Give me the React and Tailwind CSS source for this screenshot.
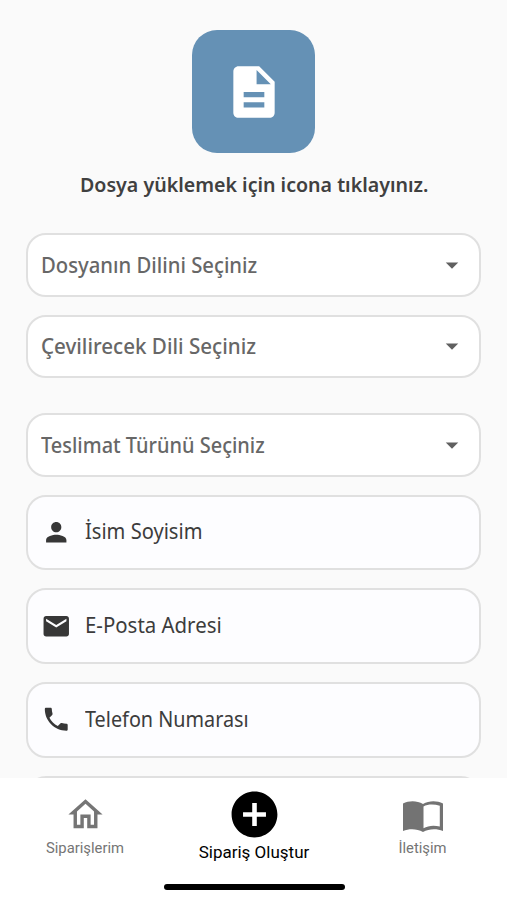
import { MdDescription, MdPerson, MdEmail, MdPhone, MdArrowDropDown, MdOutlineHome, MdAddCircle } from "react-icons/md";

const selects = [
  { label: "Dosyanın Dilini Seçiniz", box: "h-[63.500px]", text: "scale-x-[0.965]" },
  { label: "Çevilirecek Dili Seçiniz", box: "h-[63.500px] mt-[18px]", text: "scale-x-[0.98]" },
  { label: "Teslimat Türünü Seçiniz", box: "h-[63.500px] mt-[35px]", text: "scale-x-[0.95]" },
];

const inputs = [
  { label: "İsim Soyisim", Icon: MdPerson, text: "scale-x-[0.957]" },
  { label: "E-Posta Adresi", Icon: MdEmail, text: "scale-x-[0.972]" },
  { label: "Telefon Numarası", Icon: MdPhone, text: "scale-x-[0.943]" },
];

function Select({ label, box, text }) {
  return (
    <div className={`${box} shrink-0 flex items-center justify-between rounded-[20px] border-2 border-[#e0e0e0] bg-white pl-[13px] pr-[12px]`}>
      <span className={`${text} origin-left whitespace-nowrap text-[21px] leading-7 font-medium text-[#676767]`}>{label}</span>
      <MdArrowDropDown className="size-[30px] text-[#606060]" />
    </div>
  );
}

function Input({ label, Icon, text }) {
  return (
    <div className="mt-[18px] flex h-[75.700px] shrink-0 items-center rounded-[20px] border-2 border-[#e0e0e0] bg-[#fdfdff] pl-[12.500px]">
      <Icon className="size-[30.500px] shrink-0 text-[#373737]" />
      <span className={`${text} ml-[13.500px] origin-left whitespace-nowrap pb-[2px] text-[21px] leading-7 text-[#3c3c3c]`}>{label}</span>
    </div>
  );
}

function BookIcon() {
  return (
    <svg viewBox="0 0 40 31" className="h-[31px] w-[40px]" fill="#737373">
      <path fillRule="evenodd" d="M0 2.500C6-.6 14-.6 20 3 26-.6 34-.6 40 2.500V30C34 27.500 26 27.500 20 31 14 27.500 6 27.500 0 30ZM20.500 5.500V27.200C25 24.500 31 24 36.800 25.500V4.800C31 3 25 3 20.500 5.500Z" />
    </svg>
  );
}

export default function App() {
  return (
    <div className="flex h-[900px] w-full flex-col overflow-hidden bg-[#fafafa] font-['Noto_Sans','Open_Sans',sans-serif]">
      <main className="flex h-[778px] shrink-0 flex-col overflow-hidden pr-[26px] pl-[26.400px] pt-[30px]">
        <div className="flex size-[123px] shrink-0 items-center justify-center self-center rounded-[25px] bg-[#6591b5]">
          <MdDescription className="size-[62px] text-white" />
        </div>
        <div className="mt-[16.500px] mb-[34.500px] flex h-[29px] shrink-0 items-center justify-center pl-px">
          <span className="scale-x-[0.956] whitespace-nowrap text-[20.500px] font-semibold text-[#404040]">Dosya yüklemek için icona tıklayınız.</span>
        </div>
        {selects.map((s) => <Select key={s.label} {...s} />)}
        {inputs.map((i) => <Input key={i.label} {...i} />)}
        <div className="mt-[18px] h-[75px] shrink-0 rounded-[20px] border-2 border-[#e0e0e0] bg-[#fdfdff]" />
      </main>
      <nav className="flex h-[122px] shrink-0 flex-col bg-white font-[Roboto,sans-serif]">
        <div className="grid h-[106px] grid-cols-3 text-center text-[#757575]">
          <div className="flex flex-col items-center pt-[16px] pl-px">
            <MdOutlineHome className="size-[41px]" />
            <span className="mt-[4px] text-[14.800px] leading-[18px]">Siparişlerim</span>
          </div>
          <div className="flex flex-col items-center pt-[9px] pl-px text-black">
            <MdAddCircle className="size-[55px]" />
            <span className="text-[17px] leading-[20px]">Sipariş Oluştur</span>
          </div>
          <div className="flex flex-col items-center pt-[23px]">
            <BookIcon />
            <span className="mt-[7px] text-[14.800px] leading-[18px]">İletişim</span>
          </div>
        </div>
        <div className="ml-px h-[6px] w-[181px] self-center rounded-full bg-black" />
      </nav>
    </div>
  );
}
